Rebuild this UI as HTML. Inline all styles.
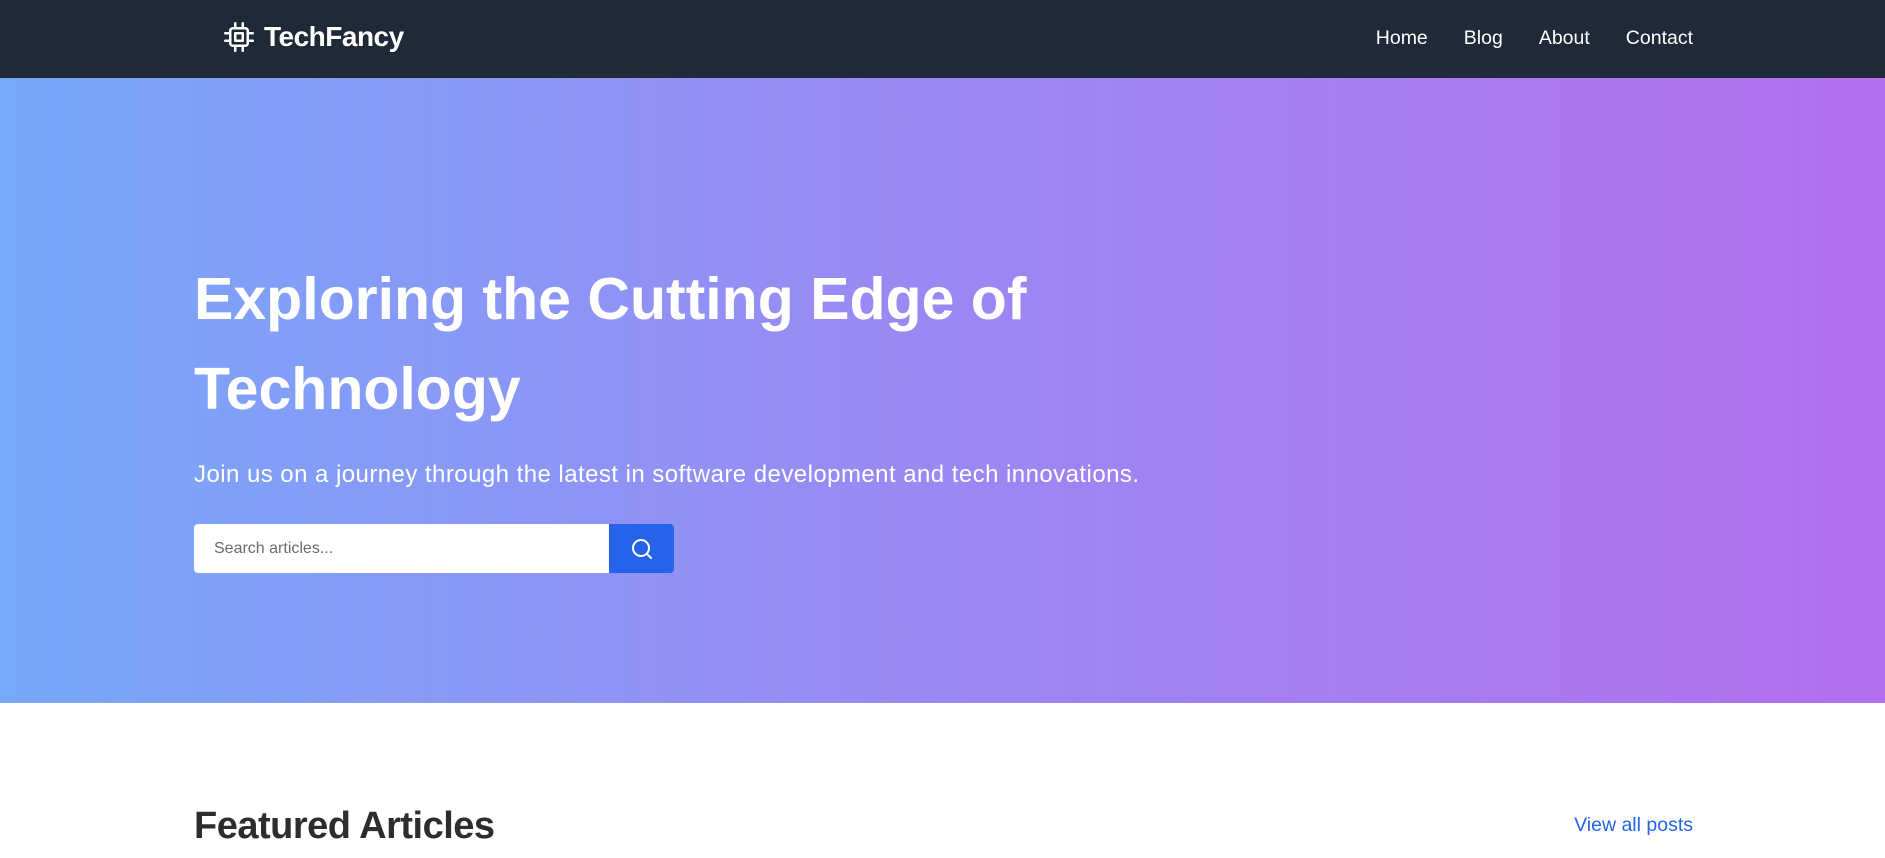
<!DOCTYPE html>
<html><head><meta charset="utf-8"><style>
*{margin:0;padding:0;box-sizing:border-box}
body{width:1885px;height:858px;overflow:hidden;font-family:"Liberation Sans",sans-serif;background:#fff}
nav{height:78px;background:#1f2937;position:relative;color:#fff}
.logo{position:absolute;left:224px;top:21px;display:flex;align-items:center;gap:10px;font-size:28px;font-weight:bold;letter-spacing:-0.5px}
.links{position:absolute;right:192px;top:27px;display:flex;gap:36px;font-size:19.5px}
.hero{position:absolute;top:78px;left:0;width:1885px;height:625px;background:linear-gradient(90deg,#77a8fa 0%,#9b88f2 50%,#b36ff0 100%)}
h1{position:absolute;left:194px;top:176px;width:1000px;font-size:59px;line-height:90px;color:#fff;font-weight:bold;letter-spacing:0}
.sub{position:absolute;left:194px;top:383px;font-size:24px;color:#fff;letter-spacing:0.45px}
.search{position:absolute;left:194px;top:446px;width:480px;height:49px;border-radius:4px;overflow:hidden;display:flex}
.search .in{width:415px;background:#fff;font-size:16px;color:#6b6b6b;padding:16px 0 0 20px}
.search .btn{width:65px;background:#2563eb;display:flex;align-items:center;justify-content:center}
h2{position:absolute;left:194px;top:805px;font-size:38px;color:#2d2d2d;font-weight:bold;letter-spacing:-0.5px}
.view{position:absolute;right:192px;top:814px;font-size:19.5px;color:#2563eb}
</style></head><body>
<nav>
<div class="logo"><svg width="30" height="30" viewBox="0 0 24 24" fill="none" stroke="#fff" stroke-width="2" stroke-linecap="round" stroke-linejoin="round"><rect x="5" y="5" width="14" height="14" rx="2"/><rect x="9" y="9" width="6" height="6"/><path d="M9 1v4M15 1v4M9 19v4M15 19v4M1 9h4M1 15h4M19 9h4M19 15h4"/></svg>TechFancy</div>
<div class="links"><span>Home</span><span>Blog</span><span>About</span><span>Contact</span></div>
</nav>
<div class="hero">
<h1>Exploring the Cutting Edge of Technology</h1>
<div class="sub">Join us on a journey through the latest in software development and tech innovations.</div>
<div class="search"><div class="in">Search articles...</div><div class="btn"><svg width="24" height="24" viewBox="0 0 24 24" fill="none" stroke="#fff" stroke-width="2" stroke-linecap="round"><circle cx="11" cy="11" r="8"/><path d="M21 21l-4.3-4.3"/></svg></div></div>
</div>
<h2>Featured Articles</h2>
<div class="view">View all posts</div>
</body></html>
